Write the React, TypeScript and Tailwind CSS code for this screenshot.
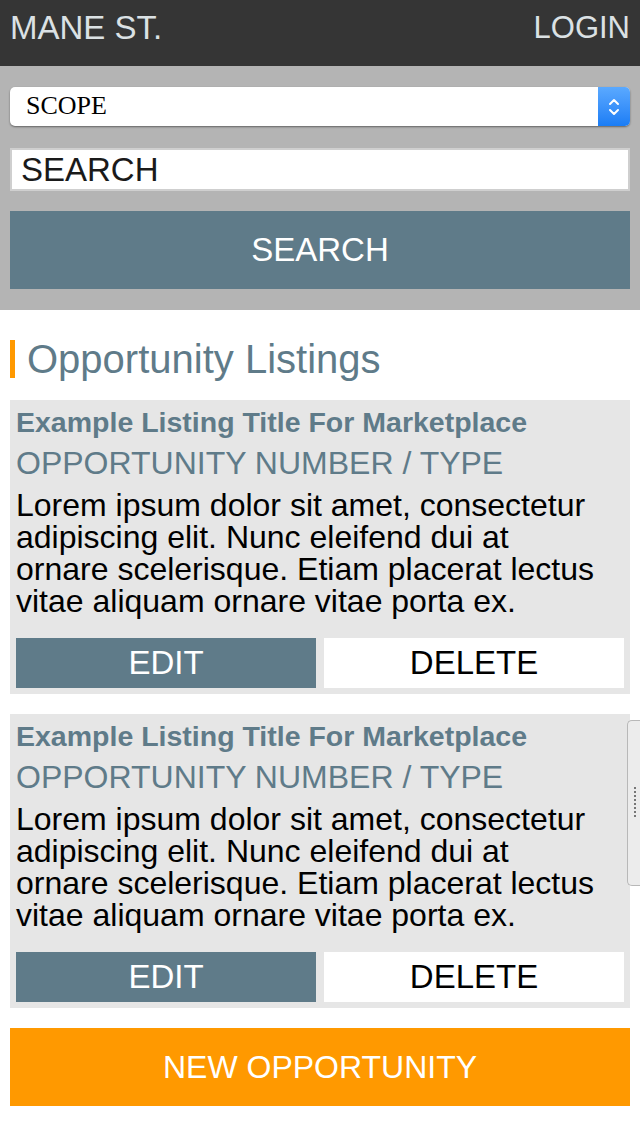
import { ChevronDown, ChevronUp } from 'lucide-react';

const listings = [
  {
    title: 'Example Listing Title For Marketplace',
    meta: 'OPPORTUNITY NUMBER / TYPE',
    body: 'Lorem ipsum dolor sit amet, consectetur adipiscing elit. Nunc eleifend dui at ornare scelerisque. Etiam placerat lectus vitae aliquam ornare vitae porta ex.',
  },
  {
    title: 'Example Listing Title For Marketplace',
    meta: 'OPPORTUNITY NUMBER / TYPE',
    body: 'Lorem ipsum dolor sit amet, consectetur adipiscing elit. Nunc eleifend dui at ornare scelerisque. Etiam placerat lectus vitae aliquam ornare vitae porta ex.',
  },
];

function ListingCard({ title, meta, body }: { title: string; meta: string; body: string }) {
  return (
    <div className="bg-[#e6e6e6] p-[6px]">
      <h3 className="whitespace-nowrap text-[28.5px] font-bold leading-[32px] text-[#5f7b89]">{title}</h3>
      <p className="mt-[7px] whitespace-nowrap text-[32px] leading-[36px] text-[#5f7b89]">{meta}</p>
      <p className="mt-[8px] pr-[22px] text-[32px] leading-[32px] text-black">{body}</p>
      <div className="mt-[21px] flex gap-2">
        <button className="h-[50px] flex-1 bg-[#5f7b89] text-[33px] text-white">EDIT</button>
        <button className="h-[50px] flex-1 bg-white text-[33px] text-black">DELETE</button>
      </div>
    </div>
  );
}

export default function App() {
  return (
    <div className="relative min-h-[1124px] w-[640px] bg-white font-['Liberation_Sans',Arial,sans-serif]">
      <header className="flex h-[66px] items-start justify-between bg-[#353535] px-[10px] text-[33px] leading-[56px] text-[#dbe1e4]">
        <span>MANE ST.</span>
        <span className="text-[31px]">LOGIN</span>
      </header>

      <div className="flex flex-col bg-[#b4b4b4] px-[10px] pt-[21px] pb-[21px]">
        <div className="flex h-[39px] overflow-hidden rounded-[5px] bg-white shadow-[0_1px_2px_rgba(0,0,0,0.45)]">
          <span className="flex-1 pl-[16px] pt-[4px] font-['Liberation_Serif',serif] text-[26px] leading-[30px] text-black">SCOPE</span>
          <span className="flex w-[32px] flex-col items-center justify-center bg-gradient-to-b from-[#5aa9ff] to-[#1a7df5] text-white">
            <ChevronUp size={16} strokeWidth={3} className="-mb-[3px]" />
            <ChevronDown size={16} strokeWidth={3} className="-mt-[3px]" />
          </span>
        </div>
        <div className="mt-[22px] flex h-[43px] items-center border-2 border-[#cfcfcf] bg-white px-[9px] text-[33px] text-[#1a1a1a]">
          SEARCH
        </div>
        <button className="mt-[20px] h-[78px] bg-[#5f7b89] text-[33px] text-white">SEARCH</button>
      </div>

      <div className="px-[10px] pt-[30px] pb-[18px]">
        <div className="flex items-center">
          <span className="h-[38px] w-[5px] bg-[#ff9900]" />
          <h2 className="ml-[12px] text-[40px] leading-[38px] text-[#5f7b89]">Opportunity Listings</h2>
        </div>
        <div className="mt-[22px] flex flex-col gap-[20px]">
          {listings.map((l, i) => (
            <ListingCard key={i} {...l} />
          ))}
        </div>
        <button className="mt-[20px] h-[78px] w-full bg-[#ff9900] text-[32px] text-white">NEW OPPORTUNITY</button>
      </div>

      <div className="absolute right-0 top-[720px] h-[166px] w-[13px] rounded-l-[5px] border border-r-0 border-[#b8b8b8] bg-[#ececec]">
        <div className="absolute left-[6px] top-[66px] h-[30px] border-l-2 border-dotted border-[#777]" />
      </div>
    </div>
  );
}
